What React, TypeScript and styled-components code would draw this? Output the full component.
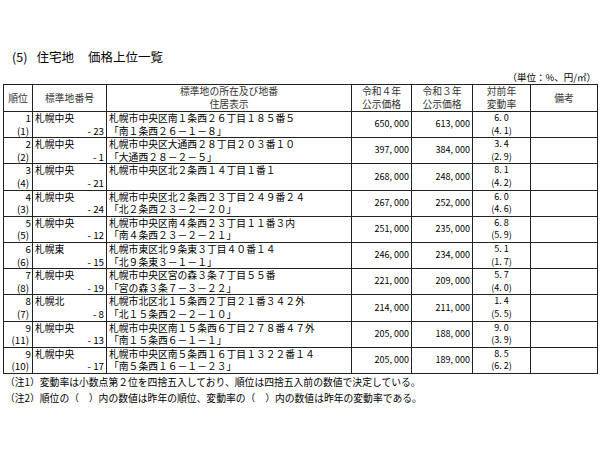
import React from "react";
import styled, { createGlobalStyle } from "styled-components";

type Row = {
  rank: string;
  prev: string;
  area: string;
  no: string;
  addr: string;
  disp?: string;
  p4: string;
  p3: string;
  rate: string;
  prevRate: string;
};

const rows: Row[] = [
  { rank: "1", prev: "(1)", area: "札幌中央", no: "- 23", addr: "札幌市中央区南１条西２６丁目１８５番５", disp: "「南１条西２６－１－８」", p4: "650, 000", p3: "613, 000", rate: "6. 0", prevRate: "(4. 1)" },
  { rank: "2", prev: "(2)", area: "札幌中央", no: "- 1", addr: "札幌市中央区大通西２８丁目２０３番１０", disp: "「大通西２８－２－５」", p4: "397, 000", p3: "384, 000", rate: "3. 4", prevRate: "(2. 9)" },
  { rank: "3", prev: "(4)", area: "札幌中央", no: "- 21", addr: "札幌市中央区北２条西１４丁目１番１", p4: "268, 000", p3: "248, 000", rate: "8. 1", prevRate: "(4. 2)" },
  { rank: "4", prev: "(3)", area: "札幌中央", no: "- 24", addr: "札幌市中央区北２条西２３丁目２４９番２４", disp: "「北２条西２３－２－２０」", p4: "267, 000", p3: "252, 000", rate: "6. 0", prevRate: "(4. 6)" },
  { rank: "5", prev: "(5)", area: "札幌中央", no: "- 12", addr: "札幌市中央区南４条西２３丁目１１番３内", disp: "「南４条西２３－２－２１」", p4: "251, 000", p3: "235, 000", rate: "6. 8", prevRate: "(5. 9)" },
  { rank: "6", prev: "(6)", area: "札幌東", no: "- 15", addr: "札幌市東区北９条東３丁目４０番１４", disp: "「北９条東３－１－１」", p4: "246, 000", p3: "234, 000", rate: "5. 1", prevRate: "(1. 7)" },
  { rank: "7", prev: "(8)", area: "札幌中央", no: "- 19", addr: "札幌市中央区宮の森３条７丁目５５番", disp: "「宮の森３条７－３－２２」", p4: "221, 000", p3: "209, 000", rate: "5. 7", prevRate: "(4. 0)" },
  { rank: "8", prev: "(7)", area: "札幌北", no: "- 8", addr: "札幌市北区北１５条西２丁目２１番３４２外", disp: "「北１５条西２－２－１０」", p4: "214, 000", p3: "211, 000", rate: "1. 4", prevRate: "(5. 5)" },
  { rank: "9", prev: "(11)", area: "札幌中央", no: "- 13", addr: "札幌市中央区南１５条西６丁目２７８番４７外", disp: "「南１５条西６－１－１」", p4: "205, 000", p3: "188, 000", rate: "9. 0", prevRate: "(3. 9)" },
  { rank: "9", prev: "(10)", area: "札幌中央", no: "- 17", addr: "札幌市中央区南５条西１６丁目１３２２番１４", disp: "「南５条西１６－１－２３」", p4: "205, 000", p3: "189, 000", rate: "8. 5", prevRate: "(6. 2)" },
];

export default function App() {
  return (
    <Page>
      <GlobalStyle />
      <Title>
        <span>(5)</span>
        <span>住宅地</span>
        <Spaced>価格上位一覧</Spaced>
      </Title>
      <Unit>（単位：%、円/㎡）</Unit>
      <Table>
        <colgroup>
          <col style={{ width: 29 }} />
          <col style={{ width: 74 }} />
          <col style={{ width: 245 }} />
          <col style={{ width: 60 }} />
          <col style={{ width: 61 }} />
          <col style={{ width: 58 }} />
          <col style={{ width: 67 }} />
        </colgroup>
        <thead>
          <tr>
            <Th>順位</Th>
            <Th>標準地番号</Th>
            <Th>
              標準地の所在及び地番
              <br />
              住居表示
            </Th>
            <Th>
              令和４年
              <br />
              公示価格
            </Th>
            <Th>
              令和３年
              <br />
              公示価格
            </Th>
            <Th>
              対前年
              <br />
              変動率
            </Th>
            <Th>備考</Th>
          </tr>
        </thead>
        <tbody>
          {rows.map((r, i) => (
            <tr key={i}>
              <RankCell>
                <Line>{r.rank}</Line>
                <Line $pad={2}>{r.prev}</Line>
              </RankCell>
              <Td>
                <Line>{r.area}</Line>
                <Line $align="right">{r.no}</Line>
              </Td>
              <Td>
                <Line>{r.addr}</Line>
                <Line>{r.disp ?? "\u00a0"}</Line>
              </Td>
              <PriceCell>{r.p4}</PriceCell>
              <PriceCell>{r.p3}</PriceCell>
              <RateCell>
                <Line>{r.rate}</Line>
                <Line>{r.prevRate}</Line>
              </RateCell>
              <NoteCell />
            </tr>
          ))}
        </tbody>
      </Table>
      <Notes>
        <p>（注1）変動率は小数点第２位を四捨五入しており、順位は四捨五入前の数値で決定している。</p>
        <p>（注2）順位の（　）内の数値は昨年の順位、変動率の（　）内の数値は昨年の変動率である。</p>
      </Notes>
    </Page>
  );
}

const GlobalStyle = createGlobalStyle`
  body {
    margin: 0;
    background: #ffffff;
    color: #000;
    font-family: "Noto Sans CJK JP", "Noto Sans", sans-serif;
  }
`;

const Page = styled.div`
  width: 600px;
  height: 450px;
  padding: 48px 3px 0 3px;
  box-sizing: border-box;
`;

const Title = styled.h1`
  margin: 0 0 0 9px;
  font-size: 12.5px;
  font-weight: normal;
  line-height: 18px;
  display: flex;
  gap: 9px;
  color: #000;
`;

const Spaced = styled.span`
  margin-left: 5px;
`;

const Unit = styled.div`
  margin-top: 5px;
  text-align: right;
  font-size: 9.5px;
  line-height: 13px;
  padding-right: 1px;
`;

const Table = styled.table`
  width: 594px;
  table-layout: fixed;
  border-collapse: collapse;
  border: 1.5px solid #000;
  font-size: 9.8px;
  line-height: 12.6px;
`;

const Th = styled.th`
  height: 26px;
  padding: 0;
  font-weight: normal;
  color: #333;
  text-align: center;
  vertical-align: middle;
  line-height: 13px;
  border: 1px solid #222;
`;

const Td = styled.td`
  height: 25.2px;
  padding: 0 2px;
  vertical-align: top;
  border: 1px solid #222;
  white-space: nowrap;
  overflow: hidden;
`;

const RankCell = styled(Td)`
  text-align: right;
  padding-right: 1px;
`;

const PriceCell = styled(Td)`
  text-align: right;
  vertical-align: middle;
  font-size: 9px;
  padding-right: 2px;
`;

const RateCell = styled(Td)`
  text-align: center;
  font-size: 9px;
`;

const NoteCell = styled(Td)`
  border-left: 1.5px solid #666;
`;

const Line = styled.div<{ $align?: "left" | "right"; $pad?: number }>`
  height: 12.6px;
  text-align: ${(p) => p.$align ?? "inherit"};
  padding-right: ${(p) => p.$pad ?? 0}px;
`;

const Notes = styled.div`
  padding-left: 2px;
  font-size: 9.8px;
  line-height: 16px;

  p {
    margin: 0;
  }
`;
